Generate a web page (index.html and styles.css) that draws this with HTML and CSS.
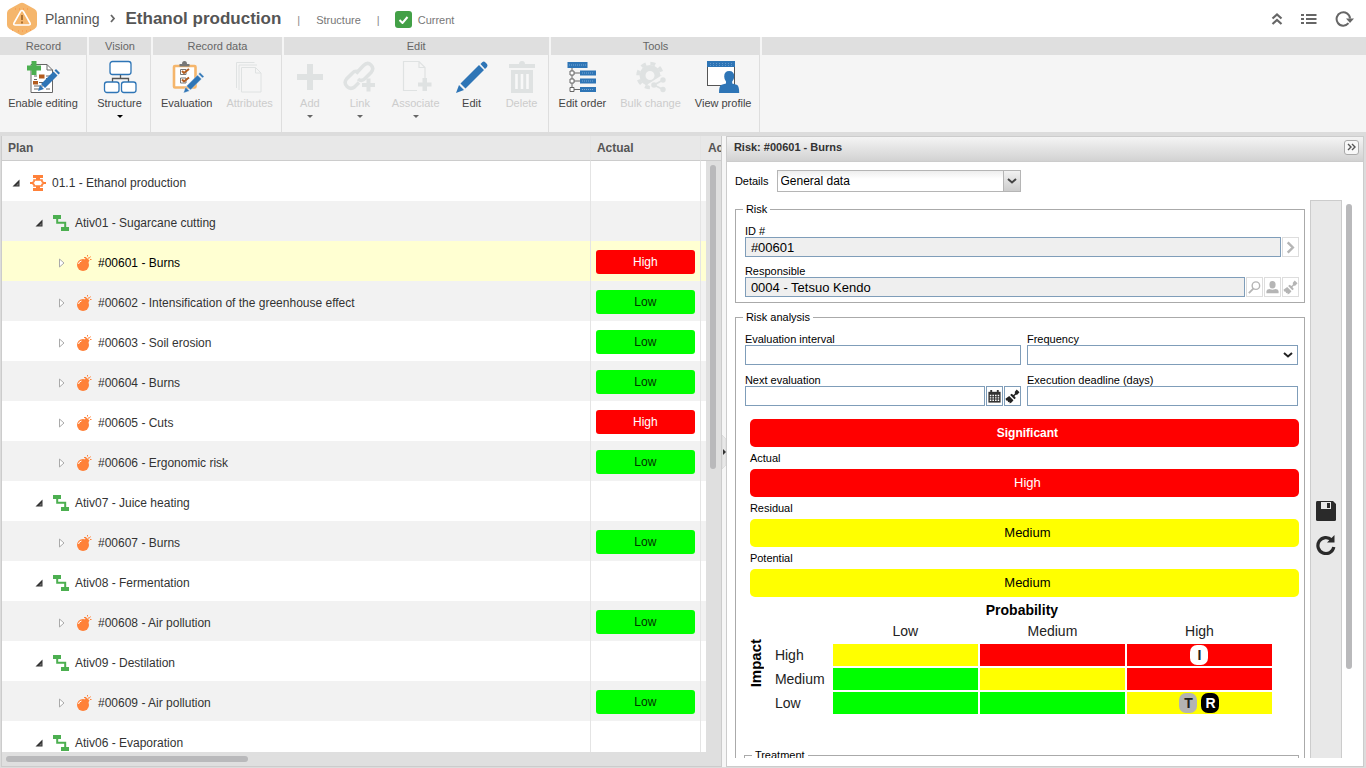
FILE: index.html
```html
<!DOCTYPE html>
<html lang="en">
<head>
<meta charset="utf-8">
<title>Planning - Ethanol production</title>
<link rel="stylesheet" href="styles.css">
</head>
<body>
<svg class="sprite" aria-hidden="true">
  <symbol id="i-open" viewBox="0 0 16 16"><path d="M11.5 4.5V11.5H4.5Z" fill="#333"/><path d="M10.5 8v2.5H8z" fill="#777"/></symbol>
  <symbol id="i-closed" viewBox="0 0 16 16"><path d="M5.500 4V12L10 8Z" fill="#fff" stroke="#aaa"/></symbol>
  <symbol id="i-plan" viewBox="0 0 16 16"><path d="M3 0h10v3H3zM3 13h10v3H3zM6 2h4v12H6zM0 7h16v2H0z" fill="#ff8139"/><path d="M4 5h8v1.500L14 8l-2 1.500V11H4V9.500L2 8l2-1.500z" fill="#fff" stroke="#ff8139" stroke-width="1.600"/></symbol>
  <symbol id="i-flow" viewBox="0 0 16 16"><path d="M0 0h8v4H0zM8 12h8v4H8z" fill="#4caf50"/><path d="M4.200 3v4.800h8V13" fill="none" stroke="#4caf50" stroke-width="2"/></symbol>
  <symbol id="i-bomb" viewBox="0 0 16 16"><circle cx="7" cy="10" r="6" fill="#ff8139"/><path d="M8.500 4l2-1.500 3 3L12 8z" fill="#ff8139"/><path d="M2.500 9q.5-2.500 3-3" stroke="#fff" fill="none"/><path d="M8 2.500h2M11.500 0v1.500M13 3.500l1.500-2M14 4.500h1.500M12 3h1" stroke="#ff8139" fill="none"/></symbol>
  <symbol id="i-pencil" viewBox="0 0 34 34"><path d="M1 33L4 25 9 30ZM5.500 23.500L24 5 29 10 10.500 28.500ZM25.500 4l2-2q1.500-1 3 .5l1.500 1.500q1 1.500 0 3l-2 2z" fill="#2e75b6"/></symbol>
  <symbol id="i-brush" viewBox="0 0 16 16"><path d="M15.500 3.500L12.500 .5l-2 2.500v2L9 6.500 7 5 5.500 6.500 10 11l1.500-1.500-1.500-2L11.500 6H13z" fill="currentColor"/><path d="M4.500 7.500L9 12q-1.500 2.500-4 3.500l-.3-1.800-1.500.5-.2-1.700-1.700-.2L.5 10.500z" fill="currentColor"/></symbol>
  <symbol id="i-chev" viewBox="0 0 10 6"><path d="M1 1L5 4.500 9 1" fill="none" stroke="currentColor" stroke-width="2"/></symbol>
</svg>

<header class="topbar">
  <svg class="logo" viewBox="0 0 32 34"><path d="M13.500 1.500q2.500-1.500 5 0l10 5.500q2.500 1.500 2.500 4v12q0 2.500-2.500 4l-10 5.500q-2.500 1.500-5 0l-10-5.500Q1 25.500 1 23V11q0-2.500 2.500-4z" fill="#f5b66c"/><path d="M9 7h15M6 28h3m3 1h9m3-1h2" stroke="#ff8a3c" stroke-dasharray="1 3"/><path d="M14.500 9.500q1.500-2 3 0l6.500 11.500q1 2-1.500 2H9.500Q7 23 8 21z" fill="none" stroke="#fff" stroke-width="1.600"/><path d="M16 13v5m0 1.500v2" stroke="#9b6225" stroke-width="1.600"/></svg>
  <nav class="crumbs">
    <a href="#">Planning</a>
    <svg class="crumb-arrow" viewBox="0 0 6 9"><path d="M1 1l3 3.500L1 8" fill="none" stroke="#666" stroke-width="1.800"/></svg>
    <h1>Ethanol production</h1>
  </nav>
  <span class="bar">|</span><span class="meta">Structure</span><span class="bar">|</span>
  <label class="current"><input type="checkbox" checked><svg class="tick" viewBox="0 0 10 8"><path d="M1 4l3 3 5-6" fill="none" stroke="#fff" stroke-width="2"/></svg>Current</label>
  <div class="top-actions">
    <button aria-label="Collapse"><svg width="12" height="14" viewBox="0 0 12 14"><path d="M1.500 6.500L6 2.500l4.500 4M1.500 12L6 8l4.500 4" fill="none" stroke="#666" stroke-width="2.200"/></svg></button>
    <button aria-label="List"><svg width="16" height="12" viewBox="0 0 16 12"><path d="M0 2h3m2 0h10.500M0 6h3m2 0h10.500M0 10h3m2 0h10.500" stroke="#666" stroke-width="2"/></svg></button>
    <button aria-label="Reload"><svg width="19" height="16" viewBox="0 0 19 16"><path d="M13.500 12.200A6.700 6.700 0 1 1 15 7.500" fill="none" stroke="#666" stroke-width="2"/><path d="M11 7.500h8l-4 4.500z" fill="#666"/></svg></button>
  </div>
</header>

<div class="ribbon">
  <section class="group"><h2>Record</h2><div class="tools">
    <button><svg class="ico" viewBox="0 0 34 34"><path d="M5 4.500h16l5.500 5.500v22.500H5z" fill="#fff" stroke="#666"/><path d="M21 4.500V10h5.500" fill="none" stroke="#666"/><path d="M8 16h3m9 0h4M8 19.500h3m9-1h3M13 22.500h4M8 26h9M8 29h5m7 0h4" stroke="#666"/><path d="M13 14.500h5.500v4H13zM7 21h5v3.500H7z" fill="#b35c1e"/><path d="M5.500 1h5v4.500H15v5h-4.500V15h-5v-4.500H1v-5h4.500z" fill="#4caf50"/><path d="M12 31l2-6 4 4zM15 24L27.500 11.500l4 4L19 28zM28.500 10.500l1.500-1.500 4 4-1.500 1.500z" fill="#2e75b6"/></svg>Enable editing</button>
  </div></section>
  <section class="group"><h2>Vision</h2><div class="tools">
    <button><svg class="ico" viewBox="0 0 34 34"><rect x="7" y="1.500" width="21" height="13" rx="2.500" fill="#fff" stroke="#2e75b6" stroke-width="1.300"/><path d="M17.500 15v3.500M9.500 22v-3.500h16V22" fill="none" stroke="#555" stroke-width="1.300"/><rect x="1.500" y="22" width="14.500" height="10.500" rx="2.500" fill="#fff" stroke="#2e75b6" stroke-width="1.300"/><rect x="18.500" y="22" width="14.500" height="10.500" rx="2.500" fill="#fff" stroke="#2e75b6" stroke-width="1.300"/></svg>Structure<i class="caret"></i></button>
  </div></section>
  <section class="group"><h2>Record data</h2><div class="tools">
    <button><svg class="ico" viewBox="0 0 34 34"><rect x="4" y="6" width="21.500" height="21.500" rx="1" fill="#fff" stroke="#f5b66c" stroke-width="2.600"/><path d="M9.500 6.500V4H12q0-3 2.500-3T17 4h2.500v2.500z" fill="#777"/><path d="M10.500 9.500h5.500v5h-5.500zM10.500 18h5.500v5h-5.500z" fill="#fff" stroke="#777"/><path d="M12 11l2 2 5-4M12 19.500l2 2 5-4" fill="none" stroke="#b35c1e" stroke-width="2"/><path d="M13.500 33l2-6 4 4zM16.500 26L27.500 15l4 4-11 11zM28.500 14l1.500-1.500 4 4-1.500 1.500z" fill="#2e75b6" stroke="#f5f5f5" stroke-width=".4"/></svg>Evaluation</button>
    <button disabled><svg class="ico" viewBox="0 0 34 34" fill="none" stroke="#dfe2e2"><path d="M3.500 28V2.500h18M6 30V5h18"/><path d="M8.500 7.500h14l5.500 5.500v19H8.500zM22.500 7.500V13H28"/></svg>Attributes</button>
  </div></section>
  <section class="group"><h2>Edit</h2><div class="tools">
    <button disabled><svg class="ico" viewBox="0 0 34 34"><path d="M14 4h6v10h10v6H20v10h-6V20H4v-6h10z" fill="#dfe2e2"/></svg>Add<i class="caret"></i></button>
    <button disabled><svg class="ico" viewBox="0 0 34 34"><g fill="none" stroke="#dfe2e2" stroke-width="3.500"><path d="M13 13.500l7.500-8q4-4 7.500-.5t0 7.500l-6 6q-3.500 3.500-7 .5"/><path d="M16 12q-4-2-6.500 1l-6 6q-3 4 .5 7.500t7.500.5l4.500-4.500"/></g><path d="M23.500 18.500h4v4.500H32v4h-4.500v4.500h-4V27H19v-4h4.500z" fill="#dfe2e2"/></svg>Link<i class="caret"></i></button>
    <button disabled><svg class="ico" viewBox="0 0 34 34"><path d="M18 30.500H4.500v-29h15.500l6 6V18M20 1.500v6h6" fill="none" stroke="#dfe2e2" stroke-width="1.200"/><path d="M23.500 18h4.500v4.500h4.500v4H28V31h-4.500v-4.500H19v-4h4.500z" fill="#dfe2e2"/></svg>Associate<i class="caret"></i></button>
    <button><svg class="ico"><use href="#i-pencil"/></svg>Edit</button>
    <button disabled><svg class="ico" viewBox="0 0 34 34"><path d="M4 4h10q0-3 3-3t3 3h10v4H4zM6 10h22v23H6z" fill="#dfe2e2"/><path d="M11.500 14v15M17 14v15m5.500-15v15" stroke="#f8f8f8" stroke-width="2.600"/></svg>Delete</button>
  </div></section>
  <section class="group"><h2>Tools</h2><div class="tools">
    <button><svg class="ico" viewBox="0 0 34 34"><path d="M7 8v21.500h8M7 13h8m-8 8h8" fill="none" stroke="#666"/><path d="M2.500 2h20v6h-20zM15 10.500h16v5H15zM15 18.500h16v5H15zM15 27h16v5H15z" fill="#2e75b6"/><path d="M4 5h17M17 13h12M17 21h12M17 29.500h12" stroke="#78a8d4" stroke-dasharray="1 1"/><path d="M5 11h4v4H5zM5 19h4v4H5zM5 27.500h4v4H5z" fill="#fff" stroke="#666"/></svg>Edit order</button>
    <button disabled><svg class="ico" viewBox="0 0 34 34"><circle cx="16" cy="15.500" r="7.500" fill="none" stroke="#dfe2e2" stroke-width="6"/><circle cx="16" cy="15.500" r="12" fill="none" stroke="#dfe2e2" stroke-width="3.600" stroke-dasharray="5 4.425"/><path d="M19 24.500L29 18v13z" fill="#f5f5f5" stroke="#f5f5f5" stroke-width="6"/><path d="M29 20l-9 5 9 4.500" fill="none" stroke="#dfe2e2" stroke-width="1.800"/><circle cx="29" cy="20" r="2.700" fill="#dfe2e2"/><circle cx="20" cy="25" r="2.800" fill="#dfe2e2"/><circle cx="29" cy="29.500" r="2.700" fill="#dfe2e2"/></svg>Bulk change</button>
    <button><svg class="ico" viewBox="0 0 34 34"><rect x="1.500" y="2" width="27" height="23.500" fill="#fff" stroke="#555"/><path d="M1 1h28v6H1z" fill="#2e75b6"/><path d="M4 3.500h22M4 5.500h22" stroke="#78a8d4" stroke-width=".7" stroke-dasharray="1 2"/><path d="M18.200 16.500q0-5.500 5-5.500t5 5.500q0 3-2 5v2q3 .5 5 1.500 2 1.500 2 8H13q0-6.500 2-8 2-1 5-1.500v-2q-1.800-2-1.800-5z" fill="#2e75b6"/></svg>View profile</button>
  </div></section>
  <section class="group rest"><h2></h2></section>
</div>

<main class="work">
  <section class="plan">
    <table class="tree">
      <colgroup><col><col class="c-actual"><col class="c-more"></colgroup>
      <thead><tr><th>Plan</th><th>Actual</th><th class="cut">Ac</th></tr></thead>
      <tbody>
        <tr><td><div class="node"><button aria-label="Collapse"><svg><use href="#i-open"/></svg></button><svg><use href="#i-plan"/></svg>01.1 - Ethanol production</div></td><td></td><td></td></tr>
        <tr><td><div class="node l1"><button aria-label="Collapse"><svg><use href="#i-open"/></svg></button><svg><use href="#i-flow"/></svg>Ativ01 - Sugarcane cutting</div></td><td></td><td></td></tr>
        <tr class="selected"><td><div class="node l2"><button aria-label="Expand"><svg><use href="#i-closed"/></svg></button><svg><use href="#i-bomb"/></svg>#00601 - Burns</div></td><td><span class="pill high">High</span></td><td></td></tr>
        <tr><td><div class="node l2"><button aria-label="Expand"><svg><use href="#i-closed"/></svg></button><svg><use href="#i-bomb"/></svg>#00602 - Intensification of the greenhouse effect</div></td><td><span class="pill low">Low</span></td><td></td></tr>
        <tr><td><div class="node l2"><button aria-label="Expand"><svg><use href="#i-closed"/></svg></button><svg><use href="#i-bomb"/></svg>#00603 - Soil erosion</div></td><td><span class="pill low">Low</span></td><td></td></tr>
        <tr><td><div class="node l2"><button aria-label="Expand"><svg><use href="#i-closed"/></svg></button><svg><use href="#i-bomb"/></svg>#00604 - Burns</div></td><td><span class="pill low">Low</span></td><td></td></tr>
        <tr><td><div class="node l2"><button aria-label="Expand"><svg><use href="#i-closed"/></svg></button><svg><use href="#i-bomb"/></svg>#00605 - Cuts</div></td><td><span class="pill high">High</span></td><td></td></tr>
        <tr><td><div class="node l2"><button aria-label="Expand"><svg><use href="#i-closed"/></svg></button><svg><use href="#i-bomb"/></svg>#00606 - Ergonomic risk</div></td><td><span class="pill low">Low</span></td><td></td></tr>
        <tr><td><div class="node l1"><button aria-label="Collapse"><svg><use href="#i-open"/></svg></button><svg><use href="#i-flow"/></svg>Ativ07 - Juice heating</div></td><td></td><td></td></tr>
        <tr><td><div class="node l2"><button aria-label="Expand"><svg><use href="#i-closed"/></svg></button><svg><use href="#i-bomb"/></svg>#00607 - Burns</div></td><td><span class="pill low">Low</span></td><td></td></tr>
        <tr><td><div class="node l1"><button aria-label="Collapse"><svg><use href="#i-open"/></svg></button><svg><use href="#i-flow"/></svg>Ativ08 - Fermentation</div></td><td></td><td></td></tr>
        <tr><td><div class="node l2"><button aria-label="Expand"><svg><use href="#i-closed"/></svg></button><svg><use href="#i-bomb"/></svg>#00608 - Air pollution</div></td><td><span class="pill low">Low</span></td><td></td></tr>
        <tr><td><div class="node l1"><button aria-label="Collapse"><svg><use href="#i-open"/></svg></button><svg><use href="#i-flow"/></svg>Ativ09 - Destilation</div></td><td></td><td></td></tr>
        <tr><td><div class="node l2"><button aria-label="Expand"><svg><use href="#i-closed"/></svg></button><svg><use href="#i-bomb"/></svg>#00609 - Air pollution</div></td><td><span class="pill low">Low</span></td><td></td></tr>
        <tr><td><div class="node l1"><button aria-label="Collapse"><svg><use href="#i-open"/></svg></button><svg><use href="#i-flow"/></svg>Ativ06 - Evaporation</div></td><td></td><td></td></tr>
      </tbody>
    </table>
    <div class="vscroll"><div class="thumb"></div></div>
    <div class="hscroll"><div class="thumb"></div></div>
  </section>

  <div class="splitter"><button aria-label="Toggle panel"><svg width="4" height="34" viewBox="0 0 4 34"><path d="M0 0l4 4v26l-4 4z" fill="#e8e8e8" stroke="#ccc" stroke-width=".5"/><path d="M1 14v6l3-3z" fill="#333"/></svg></button></div>

  <section class="detail">
    <header class="detail-head"><h2>Risk: #00601 - Burns</h2>
      <button class="collapse" aria-label="Collapse panel"><svg width="9" height="8" viewBox="0 0 9 8"><path d="M1 1l3 3-3 3M5 1l3 3-3 3" fill="none" stroke="#555" stroke-width="1.400"/></svg></button>
    </header>
    <div class="details-row"><label for="details">Details</label>
      <div class="combo"><select id="details"><option>General data</option></select><span class="combo-btn"><svg width="10" height="6"><use href="#i-chev"/></svg></span></div>
    </div>
    <div class="detail-body">
      <form class="form">
        <fieldset>
          <legend>Risk</legend>
          <div class="field"><label for="rid">ID #</label>
            <div class="line"><input id="rid" value="#00601" readonly><button type="button" class="tool off" aria-label="Next"><svg viewBox="0 0 16 16"><path d="M5 2.500l5.500 5.500L5 13.500" fill="none" stroke="currentColor" stroke-width="2.600"/></svg></button></div></div>
          <div class="field"><label for="resp">Responsible</label>
            <div class="line"><input id="resp" value="0004 - Tetsuo Kendo" readonly><button type="button" class="tool off" aria-label="Search"><svg viewBox="0 0 16 16"><circle cx="9.500" cy="6" r="4" fill="none" stroke="currentColor" stroke-width="1.500"/><path d="M7 9l-5 5" stroke="currentColor" stroke-width="2"/></svg></button><button type="button" class="tool off" aria-label="User"><svg viewBox="0 0 16 16"><ellipse cx="8" cy="5" rx="3.300" ry="4" fill="currentColor"/><path d="M1.500 14v-2q0-2 3-2.500L8 10.500l3.500-1q3 .5 3 2.500v2z" fill="currentColor"/></svg></button><button type="button" class="tool off" aria-label="Clear"><svg><use href="#i-brush"/></svg></button></div></div>
        </fieldset>
        <fieldset class="analysis">
          <legend>Risk analysis</legend>
          <div class="pair">
            <div class="field"><label for="interval">Evaluation interval</label><div class="line"><input id="interval"></div></div>
            <div class="field"><label for="freq">Frequency</label><div class="line select"><select id="freq"><option></option></select><svg width="10" height="6"><use href="#i-chev"/></svg></div></div>
            <div class="field"><label for="next">Next evaluation</label><div class="line"><input id="next"><button type="button" class="tool" aria-label="Calendar"><svg viewBox="0 0 16 16"><path d="M1.500 3h13v11.500h-13z" fill="#333"/><path d="M4.500 1v3m7-3v3" stroke="#333" stroke-width="2"/><path d="M3 7h10M3 9.500h10M3 12h10" stroke="#fff" stroke-width="1.500" stroke-dasharray="1.600 1.200"/></svg></button><button type="button" class="tool" aria-label="Clear"><svg><use href="#i-brush"/></svg></button></div></div>
            <div class="field"><label for="deadline">Execution deadline (days)</label><div class="line"><input id="deadline"></div></div>
          </div>
          <div class="levels">
            <div class="level red strong">Significant</div>
            <h3>Actual</h3><div class="level red">High</div>
            <h3>Residual</h3><div class="level yellow">Medium</div>
            <h3>Potential</h3><div class="level yellow">Medium</div>
          </div>
          <div class="matrix-title">Probability</div>
          <table class="matrix">
            <colgroup><col class="m-impact"><col class="m-name"><col><col><col></colgroup>
            <tr><th rowspan="4"><span class="impact">Impact</span></th><td></td><th>Low</th><th>Medium</th><th>High</th></tr>
            <tr><th class="name">High</th><td class="yellow"></td><td class="red"></td><td class="red"><span class="mark white">I</span></td></tr>
            <tr><th class="name">Medium</th><td class="green"></td><td class="yellow"></td><td class="red"></td></tr>
            <tr><th class="name">Low</th><td class="green"></td><td class="green"></td><td class="yellow"><span class="mark grey">T</span><span class="mark black">R</span></td></tr>
          </table>
          <fieldset class="treatment"><legend>Treatment</legend></fieldset>
        </fieldset>
      </form>
      <div class="side">
        <button aria-label="Save"><svg viewBox="0 0 20 20"><path d="M1 0h16l3 3v15.500q0 1.500-1.500 1.500h-17Q0 20 0 18.500V1.500Q0 0 1 0z" fill="#2a2a2a"/><path d="M5 1h10v7H5z" fill="#e8e8e8"/><path d="M11 2h3v5h-3z" fill="#2a2a2a"/></svg></button>
        <button aria-label="Refresh"><svg viewBox="0 0 20 20"><path d="M15.500 4.800A8 8 0 1 0 17.800 12" fill="none" stroke="#2a2a2a" stroke-width="3.200"/><path d="M18.500 0v7.500H11z" fill="#2a2a2a"/></svg></button>
      </div>
      <div class="rscroll"><div class="thumb"></div></div>
    </div>
  </section>
</main>
</body>
</html>
```
FILE: styles.css
```css
* { box-sizing: border-box; }
body { margin: 0; height: 100vh; display: flex; flex-direction: column; overflow: hidden; background: #fff; color: #000; font: 11px/14px "Liberation Sans", Arial, sans-serif; }
button, input, select { font: inherit; color: inherit; }
button { margin: 0; padding: 0; border: 0; background: none; display: flex; align-items: center; justify-content: center; }
h1, h2, h3 { margin: 0; font-size: inherit; font-weight: normal; }
.sprite { position: absolute; width: 0; height: 0; }

.topbar { height: 37px; flex: none; display: flex; align-items: center; padding: 2px 12px 2px 6px; color: #777; }
.logo { width: 32px; height: 34px; margin-right: 7px; }
.crumbs { display: flex; align-items: center; gap: 10px; }
.crumbs a { color: #555; font-size: 14px; line-height: 20px; text-decoration: none; }
.crumbs h1 { color: #555; font-size: 17px; line-height: 20px; font-weight: bold; }
.crumb-arrow { width: 6px; height: 9px; }
.bar { margin: 2px 16px 0; color: #888; }
.meta { margin-top: 2px; }
.current { display: flex; align-items: center; gap: 6px; position: relative; margin: 2px 0 0 -1px; }
.current input { appearance: none; width: 17px; height: 17px; margin: 0; border-radius: 3px; background: #43a047; }
.tick { position: absolute; left: 3px; top: 5px; width: 11px; height: 8px; }
.top-actions { margin-left: auto; display: flex; align-items: center; gap: 18px; }

.ribbon { flex: none; height: 99px; display: flex; background: #f5f5f5; border-bottom: 4px solid #dcdcdc; }
.group { display: flex; flex-direction: column; margin-right: 2px; }
.group:first-child { min-width: 87px; }
.group:nth-child(2) { min-width: 62px; }
.group.rest { flex: 1; margin: 0; }
.group h2 { height: 18px; line-height: 18px; text-align: center; background: #dfdfdf; color: #666; }
.tools { flex: 1; display: flex; padding: 0 1px; border-right: 1px solid #dedede; }
.tools button { min-width: 50px; padding: 5px 7px 0; flex: 1 0 auto; flex-direction: column; justify-content: flex-start; color: #444; white-space: nowrap; }
.tools button:disabled { color: #ccc; }
.ico { width: 34px; height: 34px; margin-bottom: 2px; }
.caret { margin-top: 5px; border: 3px solid transparent; border-top-color: #000; border-bottom: 0; }
button:disabled .caret { border-top-color: #666; }

.work { flex: 1; min-height: 0; display: flex; background: #dcdcdc; padding: 0 2px 1px 1px; }
.plan { flex: 721 1 0; min-width: 0; position: relative; overflow: hidden; border: 1px solid #ccc; border-top: 0; background: #fff; }
.tree { width: 100%; table-layout: fixed; border-collapse: separate; border-spacing: 0; font-size: 12px; color: #333; }
.c-actual { width: 110px; }
.c-more { width: 21px; }
.tree th { height: 25px; padding: 0 6px; text-align: left; background: #e8e8e8; border-bottom: 1px solid #ccc; color: #555; }
.tree td { height: 40px; padding: 0; }
.tree th + th, .tree td + td { border-left: 1px solid #e4e4e4; }
.tree .cut { overflow: hidden; padding: 0 0 0 7px; }
.tree tbody tr:nth-child(even) { background: #f2f2f2; }
.tree .selected { background: #ffffd2; color: #000; }
.node { display: flex; align-items: center; gap: 6px; padding-left: 6px; padding-top: 3px; white-space: nowrap; }
.node svg { width: 16px; height: 16px; display: block; }
.l1 { padding-left: 29px; }
.l2 { padding-left: 52px; }
.pill { display: block; height: 24px; line-height: 24px; margin: 2px 5px 0; border-radius: 3px; text-align: center; }
.pill.high { background: #f00; color: #fff; }
.pill.low { background: #0f0; color: #030; }
.thumb { background: #b9b9bb; border-radius: 3px; }
.vscroll { position: absolute; top: 25px; right: 0; bottom: 0; width: 15px; padding: 4px 5px 4px 4px; background: #dfdfdf; }
.vscroll .thumb { width: 6px; height: 51%; }
.hscroll { position: absolute; left: 0; right: 0; bottom: 0; height: 14px; padding: 4px; background: #dfdfdf; }
.hscroll .thumb { height: 6px; width: 34%; }

.splitter { width: 4px; flex: none; display: flex; align-items: center; background: #f6f6f6; }

.detail { flex: 638 1 0; min-width: 0; display: flex; flex-direction: column; border: 1px solid #ccc; border-top: 0; background: #fff; }
.detail-head { height: 26px; flex: none; display: flex; align-items: center; justify-content: space-between; padding: 0 4px 4px 7px; border-top: 1px solid #ccc; border-bottom: 1px solid #ccc; background: linear-gradient(#f4f4f4, #d2d2d2); }
.detail-head h2 { font-weight: bold; color: #333; }
.collapse { width: 15px; height: 15px; border: 1px solid #aaa; border-radius: 3px; background: #f8f8f8; }
.details-row { flex: none; display: flex; align-items: center; gap: 8px; padding: 8px; }
.combo { position: relative; width: 244px; }
.combo select { appearance: none; display: block; width: 100%; height: 22px; padding: 0 3px; border: 1px solid #b5b5b5; border-radius: 0; background: linear-gradient(#eee, #fff 8px); font-size: 12px; }
.combo-btn { position: absolute; top: 1px; right: 1px; width: 17px; height: 20px; display: flex; align-items: center; justify-content: center; border-left: 1px solid #b5b5b5; background: linear-gradient(#f2f2f2, #ccc); color: #444; pointer-events: none; }

.detail-body { flex: 1; min-height: 0; display: flex; padding: 0 11px 8px 8px; }
.form { flex: 1; min-width: 0; overflow: hidden; padding-top: 2px; }
fieldset { margin: 0; min-width: 0; padding: 8px 5px 5px 9px; border: 1px solid #aaa; }
legend { height: 14px; margin-left: -2px; padding: 0 3px; }
.field { min-width: 0; }
.field label { display: block; height: 13px; line-height: 15px; white-space: nowrap; }
.field + .field { margin-top: 7px; }
.line { display: flex; gap: 1px; position: relative; }
.line input, .line select { appearance: none; flex: 1; min-width: 0; width: 100%; height: 20px; margin: 0; padding: 0 5px; border: 1px solid #7f9db9; border-radius: 0; background: #fff; font-size: 13px; }
.line input:read-only { background: #efefef; }
.select svg { position: absolute; right: 5px; top: 7px; pointer-events: none; color: #222; }
.tool { flex: none; width: 17px; height: 20px; border: 1px solid #7f9db9; background: #fff; color: #222; }
.tool svg { width: 15px; height: 15px; }
.tool.off { border-color: #ddd; color: #b5b5b5; }
.analysis { margin-top: 7px; border-bottom: 0; }
.pair { display: grid; grid-template-columns: 276fr 271fr; gap: 8px 6px; padding-right: 1px; }
.pair .field { margin-top: 0; }
.levels { padding: 13px 0 0 5px; }
.level { height: 28px; line-height: 28px; border-radius: 5px; text-align: center; font-size: 13px; padding-left: 6px; }
.level.strong { font-weight: bold; font-size: 12px; }
.levels h3 { height: 22px; line-height: 22px; }
.red { background: #f00; color: #fff; }
.yellow { background: #ff0; color: #000; }
.green { background: #0f0; }
.matrix-title { margin-top: 5px; text-align: center; font-size: 14px; line-height: 16px; font-weight: bold; }
.matrix { width: calc(100% - 25px); table-layout: fixed; border-collapse: separate; border-spacing: 2px; font-size: 14px; }
.matrix th { font-weight: normal; padding: 0; height: 22px; color: #222; }
.matrix td { height: 22px; padding: 0; text-align: center; }
.matrix .name { text-align: left; padding-left: 8px; }
.m-impact { width: 18px; }
.m-name { width: 64px; }
.impact { display: block; writing-mode: vertical-rl; transform: rotate(180deg); margin: 0 auto 8px; line-height: 16px; font-size: 15px; font-weight: bold; color: #000; }
.mark { display: inline-block; width: 18px; height: 20px; line-height: 20px; border-radius: 7px; margin: 0 2px; font-size: 14px; font-weight: bold; vertical-align: top; }
.mark.white { background: #fff; color: #222; }
.grey { background: #b3b3b3; color: #222; }
.black { background: #000; color: #fff; }
.treatment { margin: 32px 0 0 -1px; height: 60px; }
.side { flex: none; width: 32px; margin-left: 5px; padding-top: 96px; display: flex; flex-direction: column; align-items: center; justify-content: center; gap: 14px; border: 1px solid #ccc; border-bottom: 0; background: #e8e8e8; }
.side svg { width: 20px; height: 20px; }
.rscroll { flex: none; width: 10px; padding: 4px 0 0 4px; }
.rscroll .thumb { width: 6px; height: 84%; }
```
